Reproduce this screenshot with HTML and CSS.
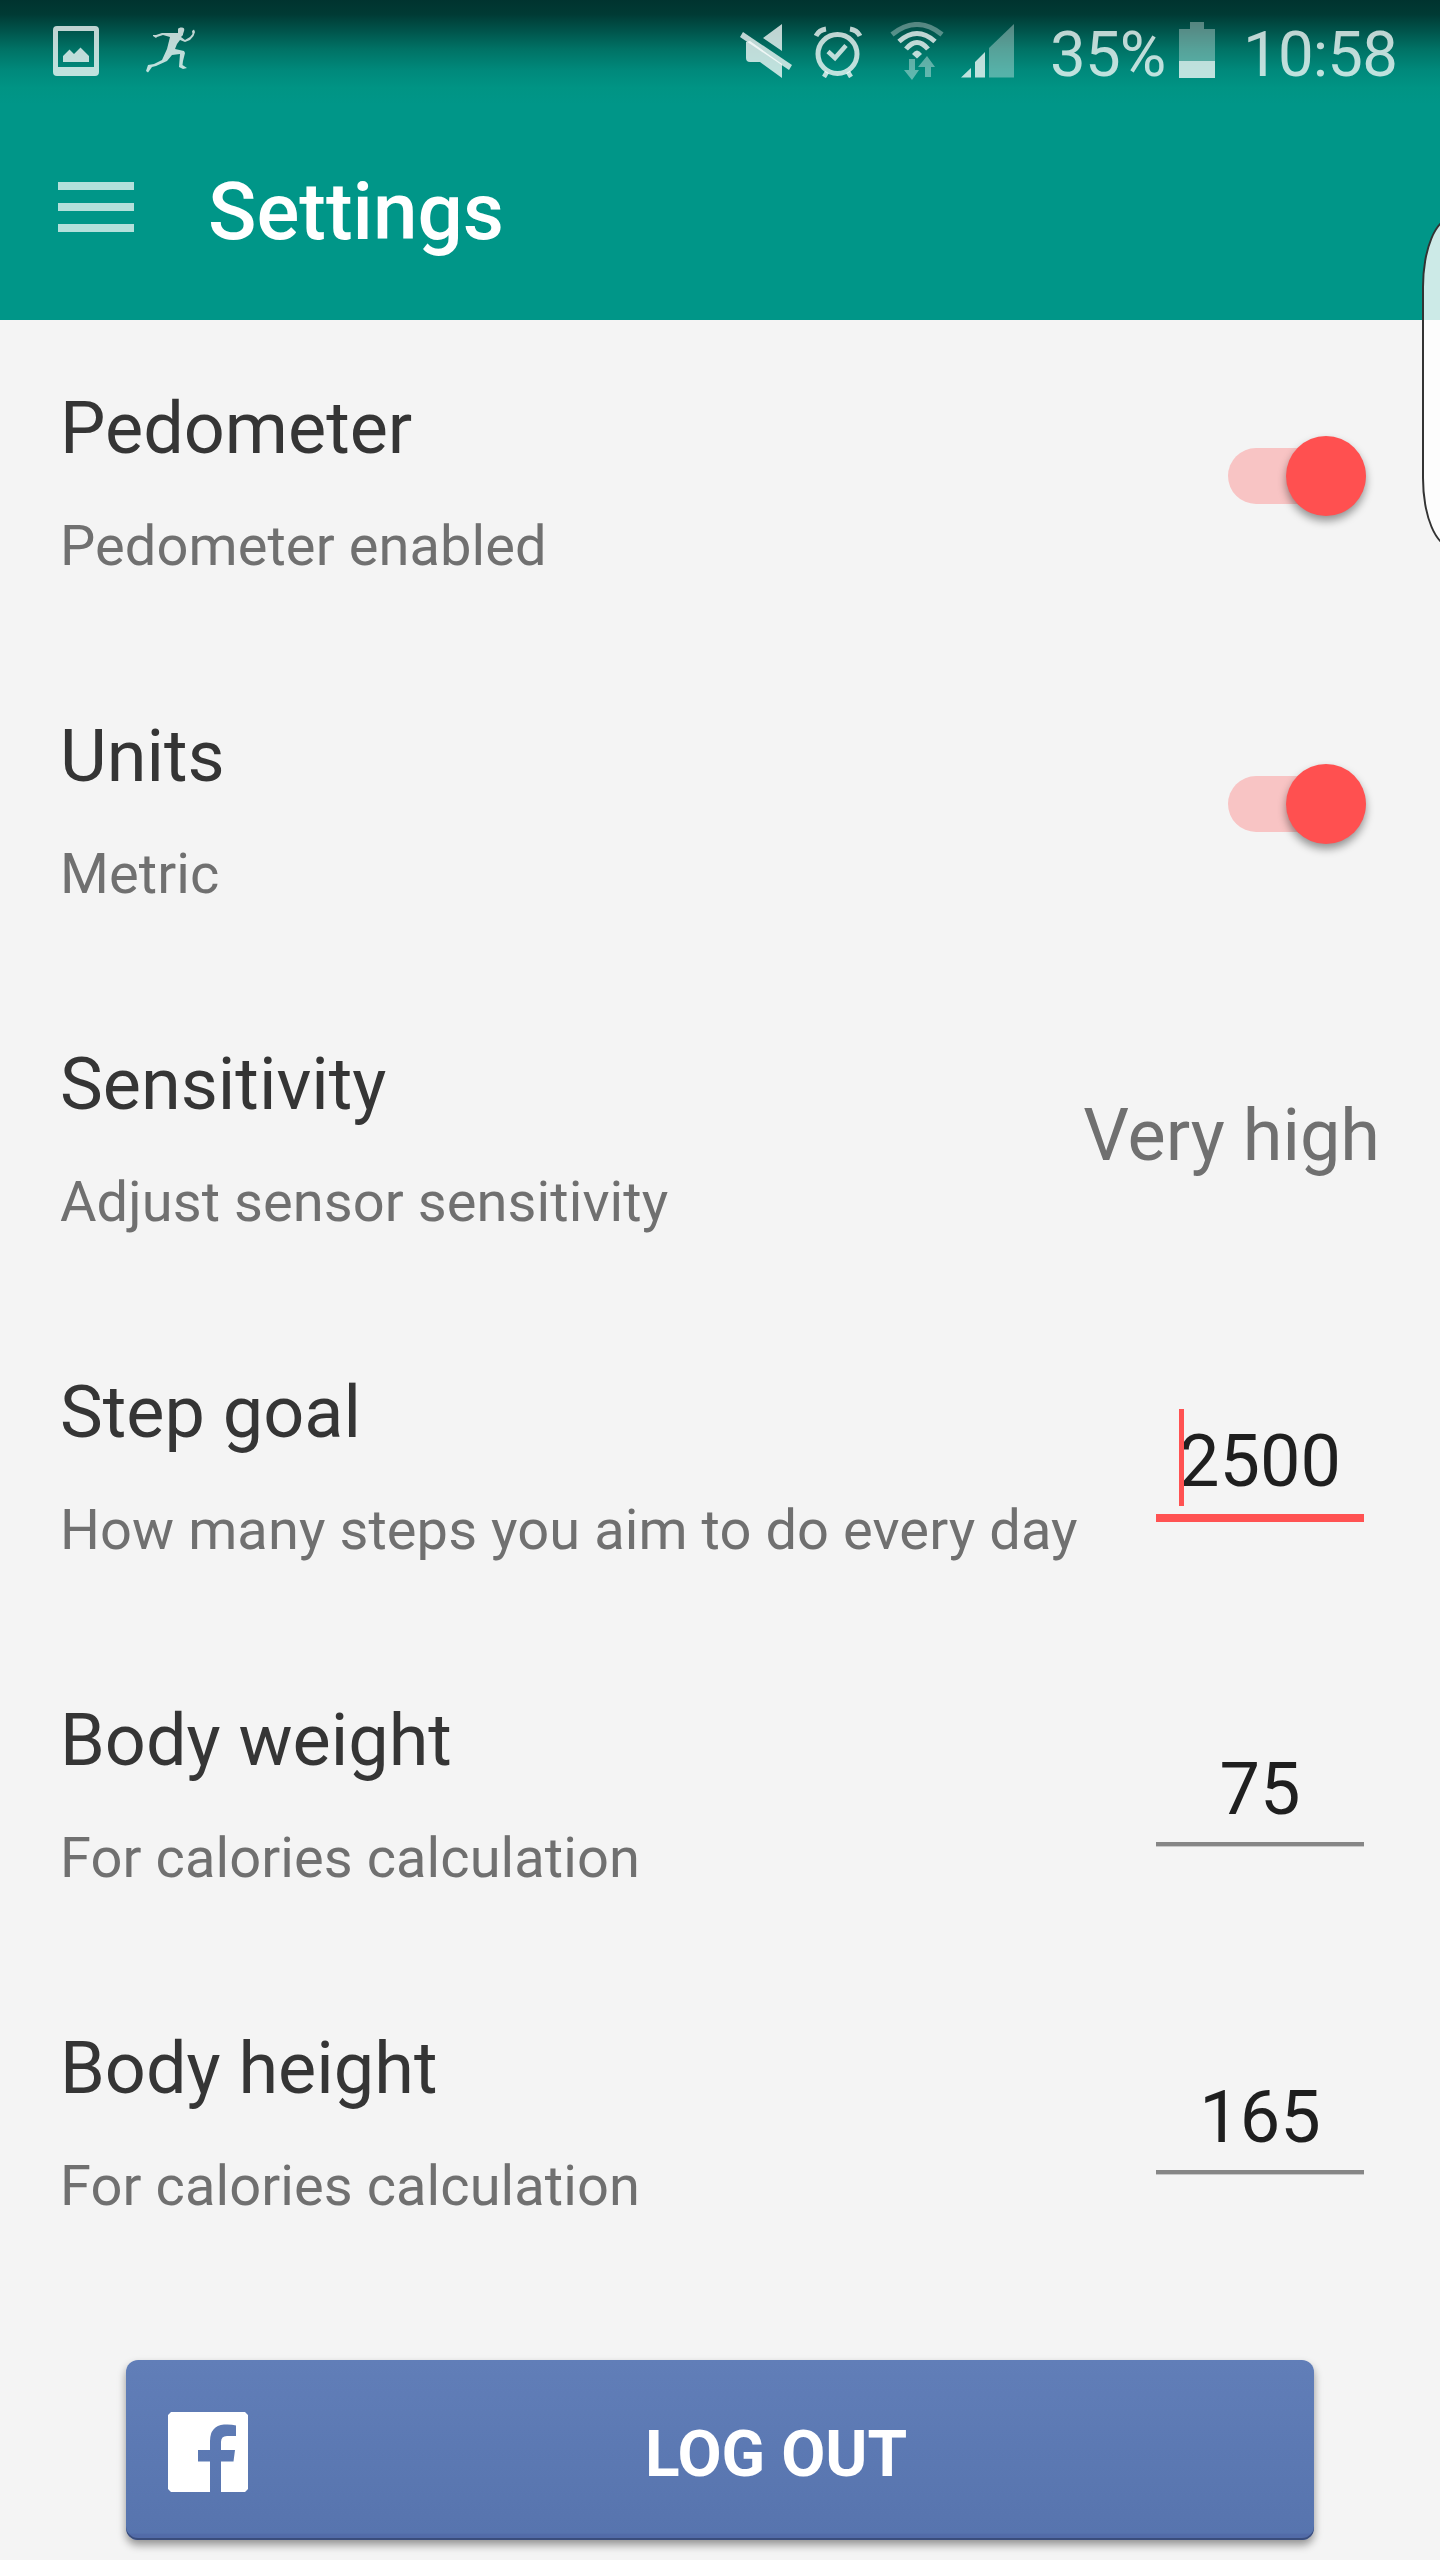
FILE: index.html
```html
<!DOCTYPE html>
<html lang="en">
<head>
<meta charset="utf-8">
<title>Settings</title>
<link rel="stylesheet" href="styles.css">
</head>
<body>
<div class="screen">
  <header class="header">
    <div class="status">
      <svg class="ic-picture" width="46" height="50" viewBox="0 0 46 50"><path fill="currentColor" fill-rule="evenodd" d="M4 0H42Q46 0 46 4V46Q46 50 42 50H4Q0 50 0 46V4Q0 0 4 0ZM5 5V41H41V5Z"/><path fill="currentColor" d="M10 36V30L16.500 23.500L21 28L27.500 21.500L36 30V36Z"/></svg>
      <svg class="ic-runner" width="50" height="46" viewBox="0 0 50 46"><path fill="currentColor" d="M32 2C33 0 37 0 38 1.500C39 3 37 6 37 8L35 10L39 13L44 10L46.500 7L46 4L48 2.500L49 5L47.500 9L44 13L39 15L34 13L31 17L29 22L38 24L39 26L37 34L36.500 38L41 41L37 42L33 40L34 27L26 28L21 34L10 39L6 40L2 45.500L0 44L2 38L8 37L16 33L21 22L24 10L17 8L11 10L10 11L7 9L7 8L10 8L16 6L28 6L32 6Z"/></svg>
      <span class="spacer"></span>
      <svg class="ic-mute" width="52" height="54" viewBox="0 0 52 54"><g fill="currentColor"><path d="M42 0V27L23 14ZM6 18L10 17L42 40V54L20 38H10Q6 38 6 34Z"/><path d="M3 8L52 41L49 46L0 13Z"/></g></svg>
      <svg class="ic-alarm" width="48" height="52" viewBox="0 0 48 52"><g fill="none" stroke="currentColor"><circle cx="23.500" cy="28" r="19.500" stroke-width="5"/><path stroke-width="4.500" d="M14 25.500L21 32L32 19.500M10 51L13 46M37 51L34 46"/><path stroke-width="5" d="M2 10Q5 4 12 3M46 10Q43 4 36 3"/></g></svg>
      <svg class="ic-wifi" width="54" height="58" viewBox="0 0 54 58"><g fill="none" stroke="currentColor" stroke-width="5"><path opacity=".45" d="M2 12.500Q27-7.500 52 12.500"/><path d="M9 19.500Q27 3.500 45 19.500M16 27Q27 14 38 27"/></g><path fill="currentColor" d="M22 32Q27 25 32 32L27 36.500Z"/><path fill="currentColor" opacity=".5" d="M19 37H25V48H29L22 58L14 48H19ZM35 55V45H28L37 34L45 45H41V55Z"/></svg>
      <svg class="ic-signal" width="53" height="54" viewBox="0 0 53 54"><path fill="currentColor" d="M0 53.500L10 44V53.500ZM14 38L24 28V53.500H14Z"/><path fill="currentColor" opacity=".45" d="M28 24L53 0V53.500H28Z"/></svg>
      <span class="percent">35%</span>
      <svg class="ic-battery" width="36" height="56" viewBox="0 0 36 56"><path fill="currentColor" opacity=".45" d="M11 0H25V7H36V39H0V7H11Z"/><path fill="currentColor" d="M0 39H36V56H0Z"/></svg>
      <span class="clock">10:58</span>
    </div>
    <div class="appbar">
      <div class="menu"><i></i><i></i><i></i></div>
      <h1 class="title">Settings</h1>
    </div>
  </header>
  <div class="edge"></div>
  <main class="list">
    <section class="row"><div class="text"><h2>Pedometer</h2><p>Pedometer enabled</p></div><div class="switch"></div></section>
    <section class="row"><div class="text"><h2>Units</h2><p>Metric</p></div><div class="switch"></div></section>
    <section class="row"><div class="text"><h2>Sensitivity</h2><p>Adjust sensor sensitivity</p></div><div class="choice">Very high</div></section>
    <section class="row"><div class="text"><h2>Step goal</h2><p>How many steps you aim to do every day</p></div><div class="field focused">2500</div></section>
    <section class="row"><div class="text"><h2>Body weight</h2><p>For calories calculation</p></div><div class="field">75</div></section>
    <section class="row"><div class="text"><h2>Body height</h2><p>For calories calculation</p></div><div class="field">165</div></section>
  </main>
  <div class="logout">
    <svg width="80" height="80" viewBox="0 0 80 80"><path fill="#fff" d="M3 0H77L80 3V77L77 80H53V49.500H65.500L67 38H53V30Q53 24 59 24H68V13.500Q63 12 56 12.500Q42 14 42 29V38H30V49.500H42V80H3L0 77V3Z"/></svg>
    <span>LOG OUT</span>
  </div>
</div>
</body>
</html>
```
FILE: styles.css
```css
* { box-sizing: border-box; }
body { margin: 0; font-family: Roboto, "Liberation Sans", sans-serif; background: #f4f4f4; }
.screen { position: relative; width: 1440px; height: 2560px; overflow: hidden; background: #f4f4f4; }
.header { height: 320px; background: linear-gradient(#00332f 0, #003a34 14px, #00564d 32px, #007265 49px, #00897b 70px, #009484 88px, #009688 104px); }
.status { display: flex; align-items: flex-start; height: 96px; padding-left: 53px; color: rgba(255, 255, 255, .75); }
.status svg { flex: none; }
.spacer { flex: 1; }
.ic-picture { margin-top: 26px; }
.ic-runner { margin: 27px 0 0 47px; }
.ic-mute { margin-top: 24px; }
.ic-alarm { margin: 26px 0 0 22px; }
.ic-wifi { margin: 22px 0 0 28px; }
.ic-signal { margin: 24px 0 0 17px; }
.percent, .clock { flex: none; margin-top: 17px; font-size: 63.5px; line-height: 76px; letter-spacing: -.8px; }
.percent { width: 129px; margin-left: 36px; }
.ic-battery { margin-top: 22px; }
.clock { width: 197px; margin-left: 28px; }
.appbar { display: flex; height: 224px; padding: 69px 0 0 58px; }
.menu { display: grid; width: 76px; height: 71px; padding-top: 17px; gap: 13px; align-content: start; }
.menu i { display: block; height: 8px; background: rgba(255, 255, 255, .7); }
.title { margin: 0 0 0 74px; font-size: 80px; font-weight: 500; line-height: 94px; color: #fff; }
.edge { position: absolute; left: 1422px; top: 217px; width: 60px; height: 331px; border: 2px solid #333; border-radius: 30px / 70px; background: rgba(255, 255, 255, .8); }
.list { padding: 0 60px; }
.row { display: flex; justify-content: space-between; height: 328px; padding-top: 67px; }
.text { white-space: nowrap; }
h2 { margin: 0; font-size: 72px; font-weight: 400; line-height: 84px; color: #353535; }
p { margin: 42px 0 0; font-size: 56px; line-height: 66px; letter-spacing: .08px; color: #707070; }
.switch { display: flex; justify-content: flex-end; align-items: center; width: 138px; height: 56px; margin: 61px 14px 0 0; border-radius: 28px; background: #f8c4c4; }
.switch::after { content: ""; width: 80px; height: 80px; border-radius: 50%; background: #ff5050; box-shadow: 0 5px 9px rgba(0, 0, 0, .4); }
.choice { margin-top: 51px; font-size: 72px; line-height: 84px; color: #707070; }
.field { position: relative; width: 208px; height: 98px; margin: 49px 16px 0 0; border-bottom: 4px solid #868686; box-shadow: 0 1px #c8c8c8; font-size: 72px; line-height: 84px; text-align: center; color: #1f1f1f; }
.focused { height: 102px; border-bottom: 8px solid #ff5252; box-shadow: none; }
.focused::before { content: ""; position: absolute; left: 23px; top: -11px; width: 5px; height: 97px; background: #ff5252; }
.logout { display: flex; align-items: center; width: 1188px; height: 180px; margin: 72px 0 0 126px; padding: 4px 42px 0; border-radius: 12px; color: #fff; background: linear-gradient(#617eb8, #5774ae 96%, #526ba8 97%); box-shadow: 0 5px 8px rgba(0, 0, 0, .4), inset 0 -2px #3a4d7c; }
.logout span { flex: 1; padding: 6px 0 0 32px; font-size: 64px; font-weight: 700; line-height: 76px; text-align: center; }
```
